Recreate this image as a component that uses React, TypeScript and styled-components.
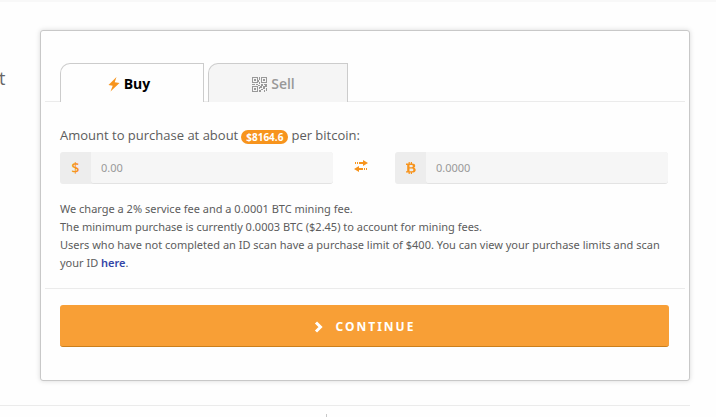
import React, { useState } from "react";
import styled, { createGlobalStyle, css } from "styled-components";

const orange = "#f7941d";

const GlobalStyle = createGlobalStyle`
  *, *::before, *::after { box-sizing: border-box; }
  body {
    margin: 0;
    background: #fefefe;
    color: #5c5c5c;
    font-family: "Open Sans", "Noto Sans", sans-serif;
    font-size: 11px;
    line-height: 18px;
    overflow: hidden;
  }
  button, input { font: inherit; margin: 0; }
`;

const Page = styled.div`
  border-top: 2px solid #f8f8f8;
  padding-right: 26px;
`;

const Section = styled.section`
  display: grid;
  grid-template-columns: 40px minmax(0, 1fr);
  padding: 28px 0 24px;
  border-bottom: 1px solid #ebebeb;
`;

const Intro = styled.p`
  margin: 0 0 0 -1px;
  padding-top: 35px;
  font-size: 18px;
  line-height: 26px;
  color: #666;
`;

const Card = styled.form`
  padding: 32px 4px 33px;
  border: 1px solid #c8c8c8;
  border-radius: 3px;
  background: #fefefe;
  box-shadow: 0 0 5px rgba(0, 0, 0, 0.15);
`;

const Tabs = styled.div`
  display: flex;
  gap: 4px;
  padding: 0 15px;
  border-bottom: 1px solid #ebebeb;
`;

const Tab = styled.button<{ $active: boolean }>`
  display: flex;
  align-items: center;
  justify-content: center;
  gap: 4px;
  width: 140px;
  height: 39px;
  margin-bottom: -1px;
  padding: 2px 9px 0 0;
  border: 1px solid #ccc;
  border-bottom: 0;
  border-radius: 10px 0 0 0;
  background: #f5f5f5;
  color: #999;
  font-size: 14px;
  font-weight: 600;
  ${(p) =>
    p.$active &&
    css`
      width: 144px;
      padding-right: 6px;
      background: #fefefe;
      color: #000;
      font-weight: 700;
    `}
`;

const Fields = styled.div`
  padding: 23px 15px 16px;
  border-bottom: 1px solid #ebebeb;
`;

const Heading = styled.p`
  display: flex;
  align-items: center;
  gap: 3px;
  margin: 0 0 6px;
  font-size: 13px;
  line-height: 21px;
`;

const Rate = styled.strong`
  padding: 0 5px;
  margin-top: 2px;
  border-radius: 7px;
  background: ${orange};
  color: #fff;
  font-size: 10px;
  font-weight: 700;
  line-height: 14px;
`;

const Amounts = styled.div`
  display: grid;
  grid-template-columns: 1fr 62px 1fr;
  margin: 0 2px 16px 0;
`;

const AmountBox = styled.label`
  display: flex;
  height: 32px;
  border-radius: 3px;
  overflow: hidden;
  background: #ededed;
`;

const Unit = styled.span`
  display: flex;
  align-items: center;
  justify-content: center;
  width: 31px;
  color: ${orange};
  font-size: 14px;
  font-weight: 600;
`;

const AmountInput = styled.input`
  flex: 1;
  min-width: 0;
  padding: 0 10px;
  border: 0;
  border-bottom: 1px solid #e3e3e3;
  border-radius: 0 0 3px 3px;
  background: #f6f6f6;
  color: #777;
  font-family: "Noto Sans", sans-serif;
  outline: 0;
  &::placeholder { color: #999; opacity: 1; }
`;

const Exchange = styled.span`
  display: flex;
  justify-content: center;
  padding: 8px 6px 0 0;
`;

const Notes = styled.p`
  margin: 0;
  font-family: "Noto Sans", sans-serif;
`;

const TextLink = styled.a`
  color: #3346a8;
  font-weight: 600;
  text-decoration: none;
`;

const Actions = styled.div`
  padding: 16px 16px 0 15px;
`;

const Continue = styled.button`
  display: flex;
  align-items: center;
  justify-content: center;
  gap: 12px;
  width: 100%;
  height: 42px;
  padding: 2px 0 0;
  border: 0;
  border-bottom: 1px solid #cb7f1c;
  border-radius: 3px;
  background: #f89f36;
  color: #fff;
  font-size: 12px;
  font-weight: 700;
  font-family: "Noto Sans", sans-serif;
  letter-spacing: 2px;
  text-transform: uppercase;
`;

const Columns = styled.div`
  width: 327px;
  height: 3px;
  margin-top: 8px;
  border-right: 1px solid #c8c8c8;
`;

const BoltIcon = () => (
  <svg width="12" height="16" viewBox="0 0 12 16" aria-hidden="true">
    <path d="M8.500 1 .5 9l4.200.8L2.500 15.500 11.500 7l-4.800-.8z" fill={orange} />
  </svg>
);

const QrIcon = () => (
  <svg width="15" height="15" viewBox="0 0 15 15" fill="none" stroke="#999" shapeRendering="crispEdges" aria-hidden="true">
    <path d="M.5.5h5v5h-5zM9.5.5h5v5h-5zM.5 9.5h5v5h-5z" />
    <path
      d="M2 2h2v2H2zM11 2h2v2h-2zM2 11h2v2H2zM7 0h1v3H7zM6 3h1v2H6zM7 5h1v2H7zM0 7h3v1H0zM4 7h2v1H4zM6 8h2v1H6zM9 7h2v2H9zM12 7h3v1h-3zM7 10h1v2H7zM8 9h2v2H8zM11 9h2v3h-2zM13 8h2v2h-2zM9 12h2v1H9zM7 13h2v2H7zM12 13h1v2h-1zM14 11h1v3h-1z"
      fill="#999"
      stroke="none"
    />
  </svg>
);

const SwapIcon = () => (
  <svg width="14" height="12" viewBox="0 0 14 12" fill={orange} aria-hidden="true">
    <path d="M5 2h4V0l5 3-5 3V4H5zM3 2h1v2H3zM1 2h1v2H1z" />
    <path d="M9 8H5V6L0 9l5 3v-2h4zM10 8h1v2h-1zM12 8h1v2h-1z" />
  </svg>
);

const BitcoinIcon = () => (
  <svg width="10" height="12" viewBox="0 0 10 12" aria-hidden="true">
    <path
      fillRule="evenodd"
      fill={orange}
      d="M0 1.500h2.600V0h1.200v1.500h1V0H6v1.500c2 .1 3.200.8 3.200 2.300 0 1-.5 1.600-1.300 2C9 6.100 9.700 6.900 9.700 8c0 1.700-1.300 2.500-3.700 2.600V12H4.800v-1.400h-1V12H2.600v-1.400H0V9.200h1.200V2.900H0zM3.500 2.900v2.300h1.400c1.300 0 2-.3 2-1.200S6.200 2.900 4.900 2.900zM3.500 6.600v2.600h1.700c1.400 0 2.200-.4 2.200-1.300s-.8-1.300-2.200-1.300z"
    />
  </svg>
);

const ChevronIcon = () => (
  <svg width="10" height="12" viewBox="0 0 10 12" aria-hidden="true">
    <path d="m2 1.500 4.500 4.500L2 10.500" fill="none" stroke="#fff" strokeWidth="3" />
  </svg>
);

export default function App() {
  const [mode, setMode] = useState("buy");
  const [dollars, setDollars] = useState("");
  const [coins, setCoins] = useState("");

  return (
    <>
      <GlobalStyle />
      <Page>
        <Section>
          <Intro>t</Intro>
          <Card onSubmit={(e) => e.preventDefault()}>
            <Tabs role="tablist">
              <Tab type="button" role="tab" aria-selected={mode === "buy"} $active={mode === "buy"} onClick={() => setMode("buy")}>
                <BoltIcon />
                Buy
              </Tab>
              <Tab type="button" role="tab" aria-selected={mode === "sell"} $active={mode === "sell"} onClick={() => setMode("sell")}>
                <QrIcon />
                Sell
              </Tab>
            </Tabs>
            <Fields>
              <Heading>
                Amount to purchase at about <Rate>$8164.6</Rate> per bitcoin:
              </Heading>
              <Amounts>
                <AmountBox>
                  <Unit>$</Unit>
                  <AmountInput aria-label="Dollars" placeholder="0.00" value={dollars} onChange={(e) => setDollars(e.target.value)} />
                </AmountBox>
                <Exchange>
                  <SwapIcon />
                </Exchange>
                <AmountBox>
                  <Unit>
                    <BitcoinIcon />
                  </Unit>
                  <AmountInput aria-label="Bitcoin" placeholder="0.0000" value={coins} onChange={(e) => setCoins(e.target.value)} />
                </AmountBox>
              </Amounts>
              <Notes>
                We charge a 2% service fee and a 0.0001 BTC mining fee.
                <br />
                The minimum purchase is currently 0.0003 BTC ($2.45) to account for mining fees.
                <br />
                Users who have not completed an ID scan have a purchase limit of $400. You can view your purchase limits and scan
                your ID <TextLink href="#limits">here</TextLink>.
              </Notes>
            </Fields>
            <Actions>
              <Continue type="submit">
                <ChevronIcon />
                Continue
              </Continue>
            </Actions>
          </Card>
        </Section>
        <Columns />
      </Page>
    </>
  );
}
